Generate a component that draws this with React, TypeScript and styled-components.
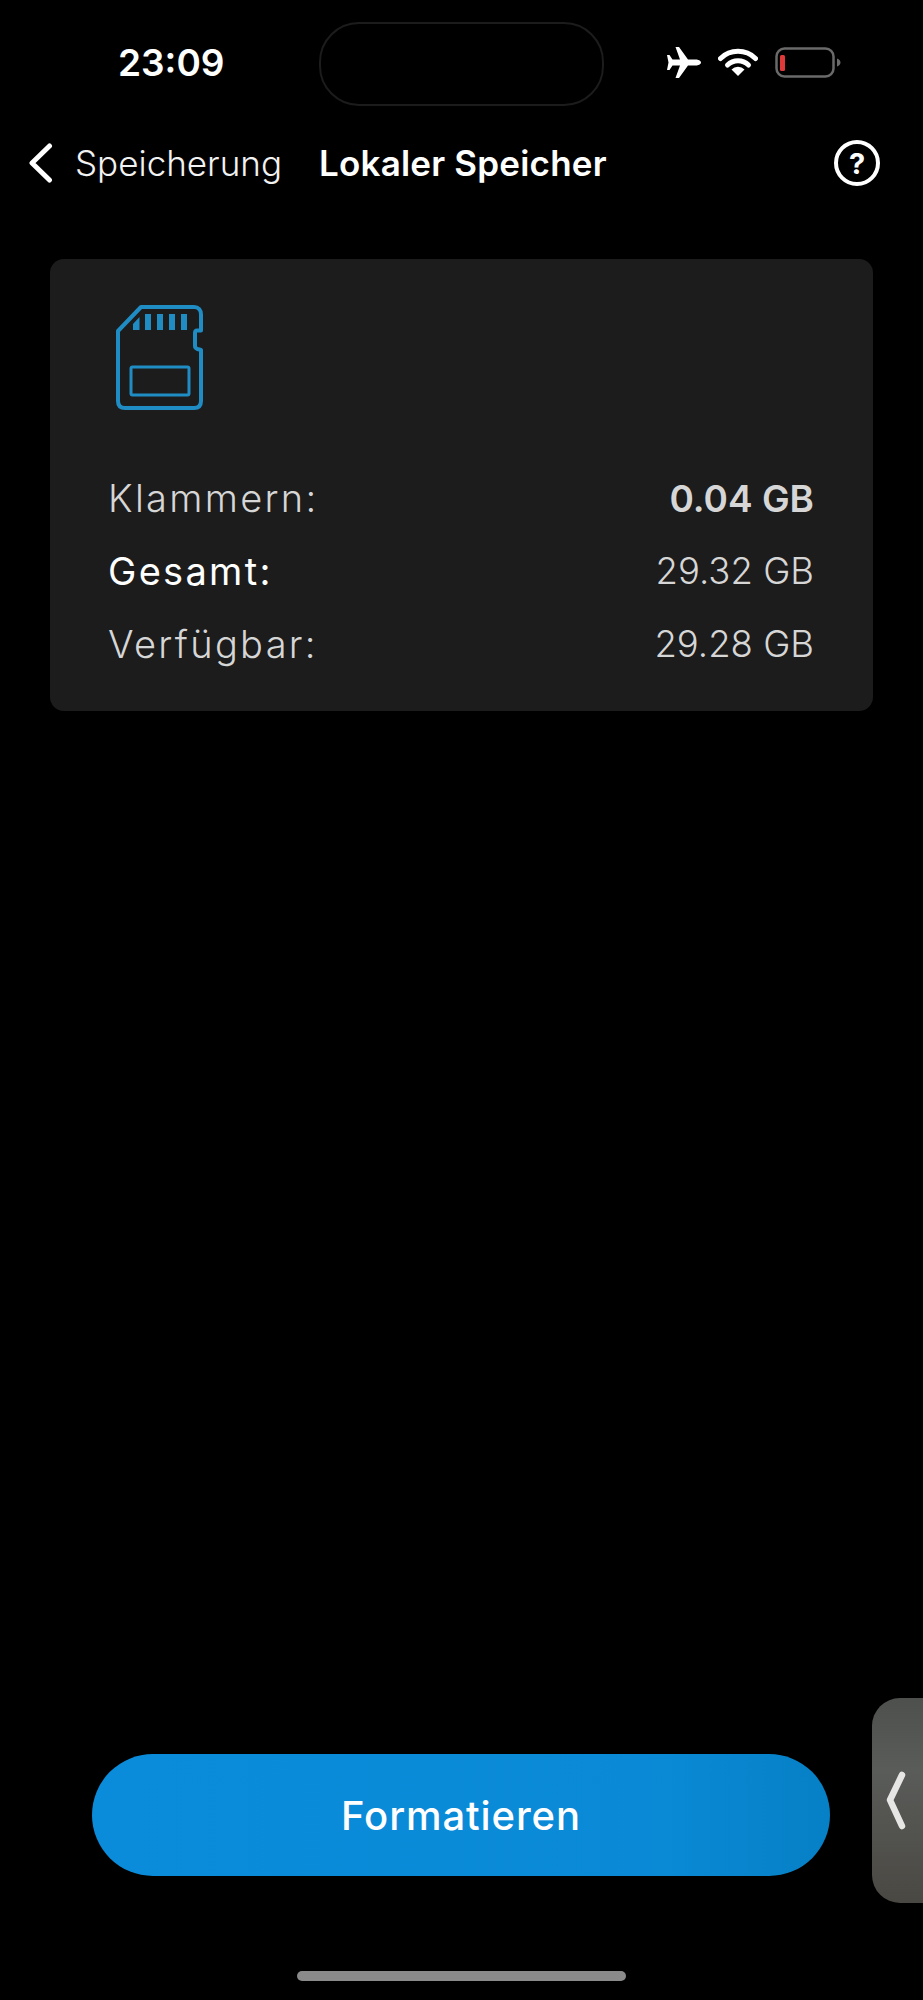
import React from 'react'
import styled, { createGlobalStyle } from 'styled-components'

const GlobalStyle = createGlobalStyle`
  html, body {
    margin: 0;
    padding: 0;
    background: #000000;
  }
`

const Screen = styled.div`
  position: relative;
  width: 923px;
  height: 2000px;
  overflow: hidden;
  display: flex;
  flex-direction: column;
  background: #000000;
  font-family: Inter, 'Open Sans', sans-serif;
  color: #ffffff;
`

const StatusBar = styled.div`
  height: 125px;
  display: flex;
  align-items: flex-start;
  justify-content: space-between;
  padding: 47px 82px 0 118px;
  box-sizing: border-box;
`

const Time = styled.div`
  font-size: 37px;
  line-height: 31px;
  font-weight: 600;
`

const Island = styled.div`
  position: absolute;
  left: 319px;
  top: 22px;
  width: 285px;
  height: 84px;
  box-sizing: border-box;
  border: 2px solid #1c1c1c;
  border-radius: 40px;
`

const StatusIcons = styled.div`
  display: flex;
  align-items: flex-start;
  gap: 17px;

  svg {
    display: block;
  }
`

const NavBar = styled.div`
  height: 64px;
  display: flex;
  align-items: center;
  padding: 6px 43px 0 28px;
`

const BackLabel = styled.span`
  margin-left: 22px;
  width: 244px;
  font-size: 35px;
  font-weight: 300;
  color: #f2f2f2;
`

const NavTitle = styled.span`
  font-size: 35px;
  font-weight: 600;
  letter-spacing: 0.2px;
  color: #ffffff;
`

const HelpButton = styled.div`
  margin-left: auto;
  width: 46px;
  height: 46px;
  box-sizing: border-box;
  border: 4px solid #ffffff;
  border-radius: 50%;
  display: flex;
  align-items: center;
  justify-content: center;
  font-size: 29px;
  font-weight: 700;
  line-height: 1;
`

const Card = styled.section`
  margin: 64px 50px 0;
  height: 452px;
  box-sizing: border-box;
  padding: 46px 59px 0 58px;
  background: #1c1c1c;
  border-radius: 14px;
`

const CardIcon = styled.svg`
  display: block;
  margin-left: 8px;
  margin-bottom: 66px;
`

const InfoList = styled.div`
  display: flex;
  flex-direction: column;
  gap: 29px;
`

const InfoRow = styled.div`
  display: flex;
  align-items: center;
  justify-content: space-between;
  height: 44px;
`

const InfoLabel = styled.span<{ $active?: boolean }>`
  font-size: 38px;
  letter-spacing: 2.3px;
  color: ${(p) => (p.$active ? '#ffffff' : '#d6d6d6')};
  font-weight: ${(p) => (p.$active ? 400 : 300)};
`

const InfoValue = styled.span<{ $strong?: boolean }>`
  font-size: ${(p) => (p.$strong ? '37px' : '36.5px')};
  color: #d6d6d6;
  font-weight: ${(p) => (p.$strong ? 600 : 300)};
`

const Footer = styled.div`
  margin-top: auto;
  padding: 0 93px 124px 92px;
`

const PrimaryButton = styled.button`
  width: 100%;
  height: 122px;
  border: none;
  border-radius: 61px;
  background: linear-gradient(90deg, #0a8cdb 0%, #0a8ad6 75%, #0680c6 100%);
  color: #ffffff;
  font-family: inherit;
  font-size: 40px;
  font-weight: 500;
  letter-spacing: 0.9px;
`

const SideHandle = styled.div`
  position: absolute;
  right: 0;
  top: 1698px;
  width: 51px;
  height: 205px;
  border-radius: 28px 0 0 28px;
  background: linear-gradient(180deg, #4e504d 0%, #5a5c59 35%, #4a4843 100%);
  display: flex;
  align-items: center;
  padding-left: 14px;
  box-sizing: border-box;
`

const HomeIndicator = styled.div`
  position: absolute;
  left: 297px;
  top: 1971px;
  width: 329px;
  height: 10px;
  border-radius: 5px;
  background: #8a8a8a;
`

export default function App() {
  return (
    <Screen>
      <GlobalStyle />
      <StatusBar>
        <Time>23:09</Time>
        <StatusIcons>
          <svg width="35" height="31" viewBox="0 0 35 31" fill="#ffffff">
            <path d="M35 15.5C35 13.5 32 12.5 30 12.5L22 12.5L13 0L9.5 0L14 12.5L6.5 12.5L3.5 8L1 8L2.5 15.5L1 23L3.5 23L6.5 18.5L14 18.5L9.5 31L13 31L22 18.5L30 18.5C32 18.5 35 17.5 35 15.5Z" />
          </svg>
          <svg width="40" height="29" viewBox="0 0 40 29" fill="none">
            <path d="M2.5 11.5A25 25 0 0 1 37.5 11.5" stroke="#ffffff" strokeWidth="5" strokeLinecap="round" />
            <path d="M9.5 18A15 15 0 0 1 30.5 18" stroke="#ffffff" strokeWidth="5" strokeLinecap="round" />
            <path d="M20 29L13.5 22.5A9 9 0 0 1 26.5 22.5Z" fill="#ffffff" />
          </svg>
          <svg width="66" height="31" viewBox="0 0 66 31" fill="none">
            <rect x="1.5" y="1.5" width="57" height="28" rx="8" stroke="#6a6a6a" strokeWidth="2.5" />
            <rect x="5" y="8" width="5" height="16" rx="1.5" fill="#e0393a" />
            <path d="M62 11.5C64.5 12.5 65.5 14 65.5 15.5C65.5 17 64.5 18.5 62 19.5Z" fill="#6a6a6a" />
          </svg>
        </StatusIcons>
      </StatusBar>
      <Island />

      <NavBar>
        <svg width="25" height="40" viewBox="0 0 25 40" fill="none">
          <path d="M21.5 3L4 20L21.5 37" stroke="#ffffff" strokeWidth="5" strokeLinecap="round" strokeLinejoin="round" />
        </svg>
        <BackLabel>Speicherung</BackLabel>
        <NavTitle>Lokaler Speicher</NavTitle>
        <HelpButton>?</HelpButton>
      </NavBar>

      <Card>
        <CardIcon width="87" height="105" viewBox="0 0 87 105" fill="none">
          <path
            d="M2 26L25 2H78C82.5 2 85 5 85 9.5V25.5H81C79.5 25.5 79 26.5 79 28V41C79 42.5 80 43.5 81.5 44L85 45V96C85 100.5 82.5 103 78 103H9C4.5 103 2 100.5 2 96Z"
            stroke="#1f8cc4"
            strokeWidth="4"
            strokeLinejoin="round"
          />
          <path
            d="M17 19L23.5 12V25H17ZM29 9H35V25H29ZM41 9H47V25H41ZM53 9H59V25H53ZM65 9H71V25H65Z"
            fill="#1f8cc4"
          />
          <rect x="15" y="62" width="58" height="28" rx="1.5" stroke="#1f8cc4" strokeWidth="3" />
        </CardIcon>
        <InfoList>
          <InfoRow>
            <InfoLabel>Klammern:</InfoLabel>
            <InfoValue $strong>0.04 GB</InfoValue>
          </InfoRow>
          <InfoRow>
            <InfoLabel $active>Gesamt:</InfoLabel>
            <InfoValue>29.32 GB</InfoValue>
          </InfoRow>
          <InfoRow>
            <InfoLabel>Verfügbar:</InfoLabel>
            <InfoValue>29.28 GB</InfoValue>
          </InfoRow>
        </InfoList>
      </Card>

      <Footer>
        <PrimaryButton>Formatieren</PrimaryButton>
      </Footer>

      <SideHandle>
        <svg width="20" height="60" viewBox="0 0 20 60" fill="none">
          <path d="M16 4L4 29L16 55" stroke="#e6e6e4" strokeWidth="6.5" strokeLinecap="round" strokeLinejoin="round" />
        </svg>
      </SideHandle>
      <HomeIndicator />
    </Screen>
  )
}
